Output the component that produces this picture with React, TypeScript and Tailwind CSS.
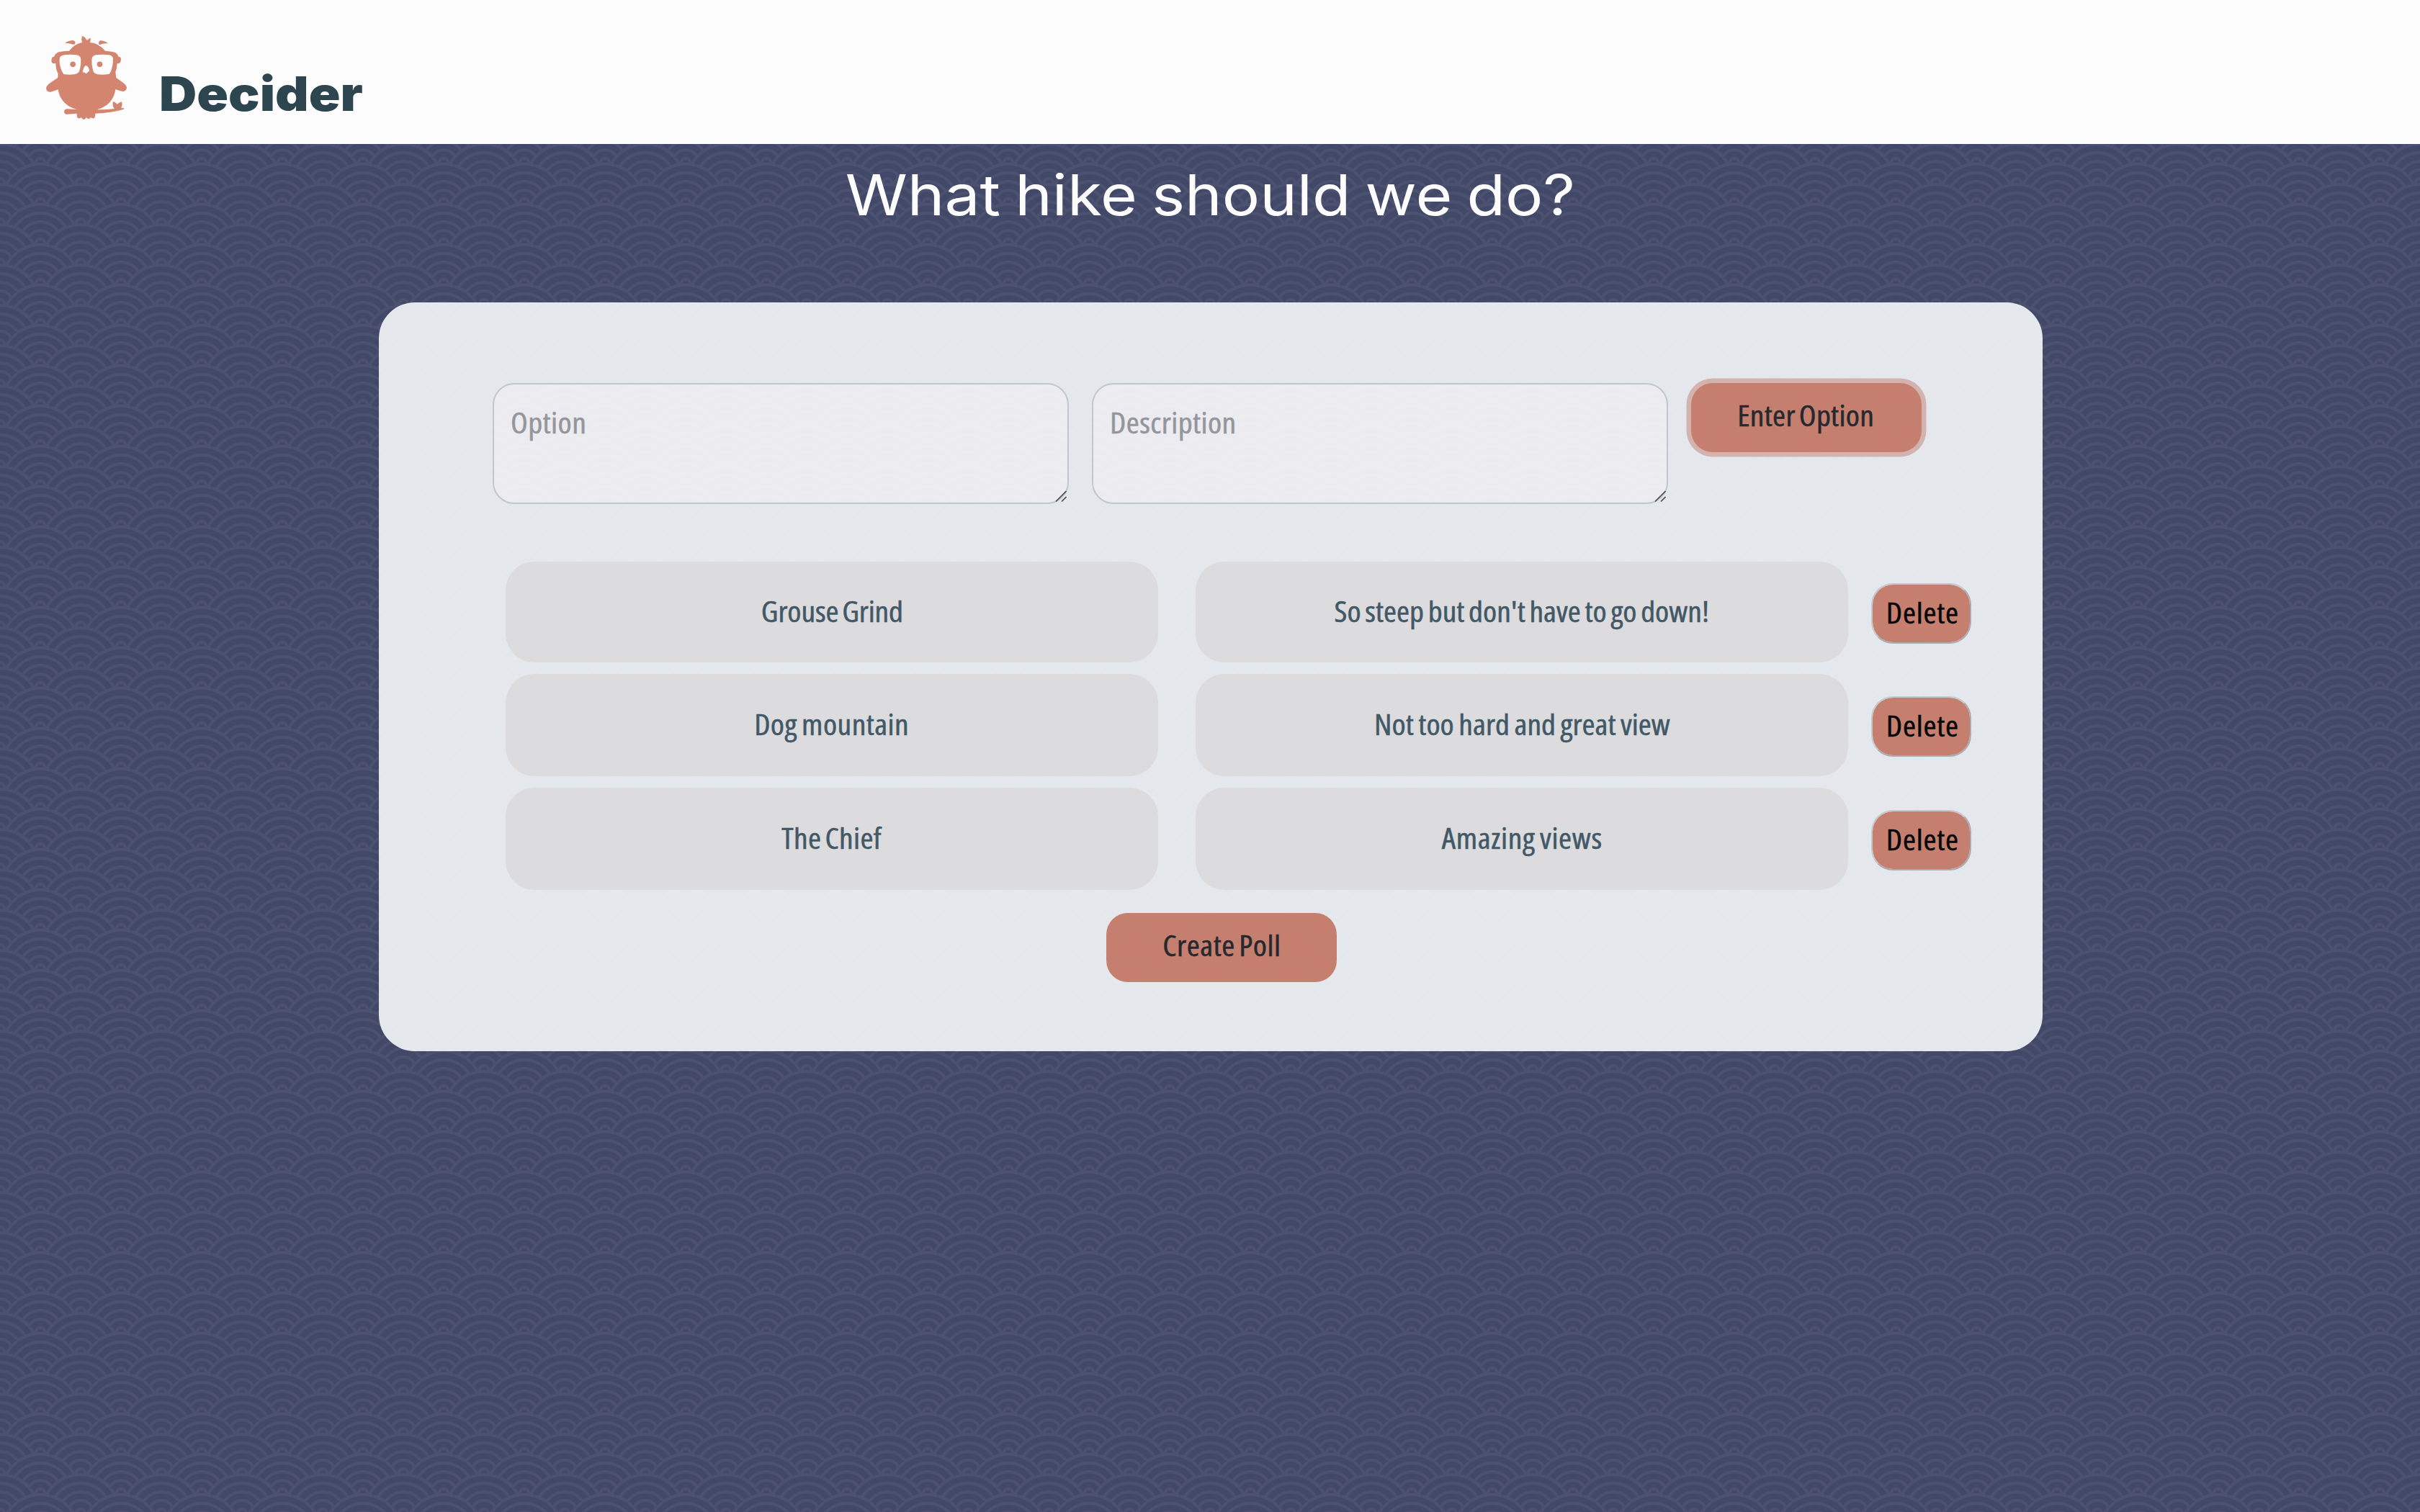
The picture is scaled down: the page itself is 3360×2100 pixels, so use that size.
const choices = [
  {
    name: "Grouse Grind",
    detail: "So steep but don't have to go down!",
    nameSpacing: "[word-spacing:-3px] tracking-[-0.1px]",
    detailSpacing: "[word-spacing:-2.2px]",
  },
  {
    name: "Dog mountain",
    detail: "Not too hard and great view",
    nameSpacing: "[word-spacing:-2px] tracking-[0.4px]",
    detailSpacing: "[word-spacing:-1.4px]",
  },
  {
    name: "The Chief",
    detail: "Amazing views",
    nameSpacing: "[word-spacing:-3px] tracking-[0.3px]",
    detailSpacing: "[word-spacing:-2px] tracking-[0.6px]",
  },
];

const waves =
  "M56 26v2h-7.75c2.3-1.27 4.94-2 7.75-2zm-26 2a2 2 0 1 0-4 0h-4.09A25.98 25.98 0 0 0 0 16v-2c.67 0 1.34.02 2 .07V14a2 2 0 0 0-2-2v-2a4 4 0 0 1 3.98 3.6 28.09 28.09 0 0 1 2.8-3.86A8 8 0 0 0 0 6V4a9.99 9.99 0 0 1 8.17 4.23c.94-.95 1.96-1.83 3.03-2.63A13.98 13.98 0 0 0 0 0h7.75c2 1.1 3.73 2.63 5.1 4.45 1.12-.72 2.3-1.37 3.53-1.93A20.1 20.1 0 0 0 14.28 0h2.7c.45.56.88 1.14 1.29 1.74 1.3-.48 2.63-.87 4-1.15-.11-.2-.23-.4-.36-.59H26v.07a28.4 28.4 0 0 1 4 0V0h4.09l-.37.59c1.38.28 2.72.67 4.01 1.15.4-.6.84-1.18 1.3-1.74h2.69a20.1 20.1 0 0 0-2.1 2.52c1.23.56 2.41 1.2 3.54 1.93A16.08 16.08 0 0 1 48.25 0H56c-4.58 0-8.65 2.2-11.2 5.6 1.07.8 2.09 1.68 3.03 2.63A9.99 9.99 0 0 1 56 4v2a8 8 0 0 0-6.77 3.74c1.03 1.2 1.97 2.5 2.79 3.86A4 4 0 0 1 56 10v2a2 2 0 0 0-2 2.07 28.4 28.4 0 0 1 2-.07v2c-9.2 0-17.3 4.78-21.91 12H30zM7.75 28H0v-2c2.81 0 5.46.73 7.75 2zM56 20v2c-5.6 0-10.65 2.3-14.28 6h-2.7c4.04-4.89 10.15-8 16.98-8zm-39.03 8h-2.69C10.65 24.3 5.6 22 0 22v-2c6.83 0 12.94 3.11 16.97 8zm15.01-.4a28.09 28.09 0 0 1 2.8-3.86 8 8 0 0 0-13.55 0c1.03 1.2 1.97 2.5 2.79 3.86a4 4 0 0 1 7.96 0zm14.29-11.86c1.3-.48 2.63-.87 4-1.15a25.99 25.99 0 0 0-44.55 0c1.38.28 2.72.67 4.01 1.15a21.98 21.98 0 0 1 36.54 0zm-5.43 2.71c1.13-.72 2.3-1.37 3.54-1.93a19.98 19.98 0 0 0-32.76 0c1.23.56 2.41 1.2 3.54 1.93a15.98 15.98 0 0 1 25.68 0zm-4.67 3.78c.94-.95 1.96-1.83 3.03-2.63a13.98 13.98 0 0 0-22.4 0c1.07.8 2.09 1.68 3.03 2.63a9.99 9.99 0 0 1 16.34 0z";

function WaveBackground() {
  return (
    <svg aria-hidden="true" className="absolute inset-0 h-full w-full">
      <defs>
        <pattern id="waves" width="56" height="28" patternUnits="userSpaceOnUse" patternTransform="translate(0 2) scale(2)">
          <path d={waves} fill="#4b516f" />
        </pattern>
      </defs>
      <rect width="100%" height="100%" fill="url(#waves)" />
    </svg>
  );
}

function Logo() {
  return (
    <svg viewBox="0 0 480 450" className="h-[150px] w-[160px] shrink-0" fill="#d4856f" aria-label="Decider logo">
      <path d="M222 60Q217 74 222 87Q190 93 168 122L150 123Q126 125 118 130Q108 136 105 147L98 148Q92 160 95 168Q97 175 103 174L112 174Q112 198 122 217L121 234L95 251Q73 265 72 277Q73 294 90 293Q98 292 122 283C127 318 150 353 200 366L160 364Q148 364 147 375Q148 387 159 386L200 383Q199 400 206 403Q213 404 219 399Q222 408 229 408Q237 407 239 399Q243 405 249 405Q256 405 258 399Q264 404 270 403Q278 400 277 383Q345 380 396 365L395 359L385 361Q390 350 388 334Q372 338 368 346Q363 336 350 334Q349 346 351 355L357 363Q330 367 284 367C330 355 356 322 361 282Q385 291 393 291Q406 289 408 276Q407 263 388 251L364 234L361 210Q367 196 368 174Q380 176 382 168Q386 155 381 148L374 147Q370 136 362 130Q350 124 318 122Q292 90 255 87Q258 78 257 68Q249 70 245 77Q240 76 239 75Q236 64 222 60Z" />
      <path d="M150 91Q162 79 183 78Q190 79 193 84Q195 90 190 95Q183 96 173 92Q162 89 150 91ZM330 91Q315 79 298 79Q289 82 292 95Q298 97 306 93Q316 90 330 91Z" />
      <path
        fill="#fcfcfc"
        d="M128 155Q130 140 150 139Q174 136 198 139Q217 142 217 158Q218 178 212 202Q208 217 190 220Q168 223 145 219Q141 214 137 205Q126 178 128 155ZM262 158Q263 142 280 139Q305 136 332 139Q350 141 351 155Q352 180 343 205Q339 214 335 218Q310 223 287 220Q270 217 267 202Q261 180 262 158ZM224 211Q228 185 239 183Q250 186 253 208L249 207Q242 216 239 217Q234 211 224 211Z"
      />
      <circle cx="183.5" cy="178" r="11.5" />
      <circle cx="295.5" cy="178" r="11.5" />
    </svg>
  );
}

function Label({ text, spacing = "" }: { text: string; spacing?: string }) {
  return (
    <span className={`inline-block scale-x-[1.09] whitespace-nowrap [-webkit-text-stroke:0.5px_currentColor] ${spacing}`}>
      {text}
    </span>
  );
}

function Field({ placeholder }: { placeholder: string }) {
  return (
    <div
      role="textbox"
      className="relative h-[168px] w-[800px] rounded-[30px] border-2 border-[#ced4da] bg-[#fffdff] pt-[23px] pl-[23px] leading-[60px] text-[#9c9fa3]"
    >
      <span className="inline-block origin-left scale-x-[1.09] tracking-[0.4px] [-webkit-text-stroke:0.5px_currentColor]">
        {placeholder}
      </span>
      <svg viewBox="0 0 16 16" className="absolute right-px bottom-px h-4 w-4" stroke="#4a4a4a" strokeWidth="1.6">
        <path d="M1 15.5L15.5 1M9 15.5L15.5 9" />
      </svg>
    </div>
  );
}

function Cell({ text, spacing }: { text: string; spacing: string }) {
  return (
    <div className="flex w-[906px] items-center justify-center rounded-[40px] bg-[#edebeb] pb-[3px] text-[#425a66]">
      <Label text={text} spacing={spacing} />
    </div>
  );
}

export default function App() {
  return (
    <div className="relative isolate h-[2100px] w-[3360px] overflow-hidden bg-[#424867] font-['Open_Sans',sans-serif] text-[40px] font-medium [font-stretch:75%]">
      <WaveBackground />
      <header className="relative flex h-[200px] bg-[#fcfcfc] pt-[30px] pl-10">
        <Logo />
        <span className="ml-[21px] origin-left scale-x-[1.095] pt-[60px] font-['Inter',sans-serif] text-[66px] leading-[80px] font-black text-[#2c454e]">
          Decider
        </span>
      </header>
      <main className="relative flex flex-col items-center">
        <h1 className="mt-[21px] scale-x-[1.12] font-['Inter',sans-serif] text-[78px] leading-[100px] font-normal text-[#fcfcfc] [word-spacing:-4px]">
          What hike should we do?
        </h1>
        <section className="mt-[99px] ml-[2px] h-[1040px] w-[2310px] rounded-[50px] bg-[#f6f9fb] pt-[112px] opacity-90">
          <form className="ml-[158px] flex items-start gap-8">
            <Field placeholder="Option" />
            <Field placeholder="Description" />
            <button type="button" className="h-24 w-80 rounded-[30px] bg-[#d4856f] pr-0.5 pb-[7px] text-[#212529] ring-[6.5px] ring-[#e3beb8]">
              <Label text="Enter Option" spacing="[word-spacing:-3px] tracking-[0.25px]" />
            </button>
          </form>
          <div className="mt-20 ml-[176px] grid grid-rows-[140px_142px_142px] gap-y-4">
            {choices.map((choice) => (
              <div key={choice.name} className="flex items-stretch">
                <Cell text={choice.name} spacing={choice.nameSpacing} />
                <div className="ml-[52px] flex">
                  <Cell text={choice.detail} spacing={choice.detailSpacing} />
                </div>
                <button
                  type="button"
                  className="mt-1 ml-8 h-[84px] w-[139px] self-center rounded-[30px] border-2 border-t-[#d3d6d7] border-r-[#b6b8ba] border-b-[#b6b6b8] border-l-[#d3d6d7] bg-[#d4856f] bg-clip-padding pb-[3px] pl-[3px] text-black"
                >
                  <Label text="Delete" spacing="tracking-[0.7px]" />
                </button>
              </div>
            ))}
          </div>
          <div className="mt-8 ml-[30px] flex justify-center">
            <button type="button" className="h-24 w-80 rounded-[30px] bg-[#d4856f] pb-[7px] text-[#212529]">
              <Label text="Create Poll" spacing="[word-spacing:-3px] tracking-[0.5px]" />
            </button>
          </div>
        </section>
      </main>
    </div>
  );
}
